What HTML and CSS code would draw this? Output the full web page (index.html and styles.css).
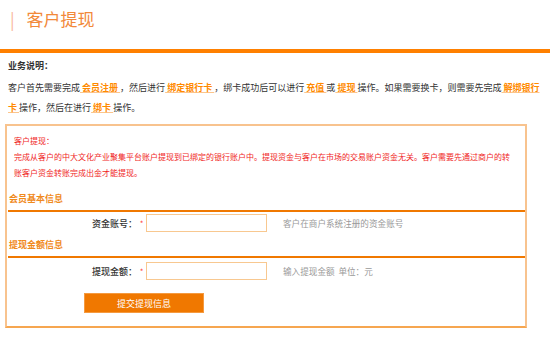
FILE: index.html
```html
<!DOCTYPE html>
<html lang="zh-CN">
<head>
  <meta charset="UTF-8">
  <title>客户提现</title>
  <link rel="stylesheet" href="styles.css">
</head>
<body>

<!-- Page title -->
<div class="page-title">
  <span class="title-mark">|</span>
  <h2>客户提现</h2>
</div>
<div class="title-bar"></div>

<!-- Business notes -->
<div class="intro">
  <p class="intro-head">业务说明：</p>
  <p>客户首先需要完成<a href="#">&nbsp;会员注册&nbsp;</a>，然后进行<a href="#">&nbsp;绑定银行卡&nbsp;</a>，绑卡成功后可以进行<a href="#">&nbsp;充值&nbsp;</a>或<a href="#">&nbsp;提现&nbsp;</a>操作。如果需要换卡，则需要先完成<a href="#">&nbsp;解绑银行卡&nbsp;</a>操作，然后在进行<a href="#">&nbsp;绑卡&nbsp;</a>操作。</p>
</div>

<!-- Form panel -->
<div class="panel">
  <div class="notice">
    <p>客户提现：</p>
    <p>完成从客户的中大文化产业聚集平台账户提现到已绑定的银行账户中。提现资金与客户在市场的交易账户资金无关。客户需要先通过商户的转账客户资金转账完成出金才能提现。</p>
  </div>

  <h3 class="section-head">会员基本信息</h3>
  <div class="form-row">
    <label for="account">资金账号：</label>
    <span class="required">*</span>
    <input type="text" id="account">
    <span class="hint">客户在商户系统注册的资金账号</span>
  </div>

  <h3 class="section-head">提现金额信息</h3>
  <div class="form-row">
    <label for="amount">提现金额：</label>
    <span class="required">*</span>
    <input type="text" id="amount">
    <span class="hint">输入提现金额&nbsp;&nbsp;单位：元</span>
  </div>

  <button class="submit-btn">提交提现信息</button>
</div>

</body>
</html>
```

FILE: styles.css
```css
* { box-sizing: border-box; }

body, html {
  margin: 0;
  padding: 0;
  background: #fff;
  font-family: "Noto Sans CJK SC", "DejaVu Sans", sans-serif;
  color: #333;
}

p, h2, h3 { margin: 0; }

/* Title */
.page-title {
  display: flex;
  align-items: center;
  height: 36px;
  padding-left: 10px;
}

.title-mark {
  color: #f9b79c;
  font-size: 17px;
  margin-right: 12px;
}

.page-title h2 {
  font-size: 17px;
  font-weight: normal;
  color: #f2893a;
}

.title-bar {
  height: 4px;
  margin-top: 13px;
  background: #ff8000;
}

/* Intro */
.intro {
  padding: 3px 8px 0;
  font-size: 9px;
  line-height: 20px;
}

.intro-head {
  font-weight: bold;
  margin-bottom: 2px;
}

.intro a {
  color: #ff8a00;
  font-weight: bold;
  text-decoration: underline;
  text-decoration-color: #fcc58c;
}

/* Panel */
.panel {
  margin: 6px 0 0 5px;
  width: 522px;
  border: 2px solid #f8c38e;
  border-bottom-color: #f6a650;
  padding: 0 0 13px 1px;
}

.notice {
  padding: 7px 10px 0 6px;
  font-size: 8px;
  line-height: 16px;
  color: #f01e1e;
}

.section-head {
  margin-top: 10px;
  padding: 0 0 3px 1px;
  font-size: 9px;
  line-height: 16px;
  color: #f08a1c;
  border-bottom: 2px solid #f07800;
}

.form-row + .section-head {
  margin-top: 5px;
}

.form-row {
  display: grid;
  grid-template-columns: 129px 9px 121px auto;
  align-items: center;
  margin-top: 2px;
  font-size: 9px;
}

.form-row + .section-head + .form-row {
  margin-top: 4px;
}

.form-row label {
  text-align: right;
  color: #333;
  font-weight: 500;
}

.required {
  color: #f44;
  font-size: 8px;
  text-align: center;
}

.form-row input {
  width: 121px;
  height: 18px;
  border: 1px solid #f8c890;
  outline: none;
  padding: 0 3px;
  font-size: 9px;
}

.hint {
  margin-left: 16px;
  color: #999;
  font-size: 8.6px;
}

.submit-btn {
  display: block;
  margin: 13px 0 0 76px;
  width: 120px;
  height: 20px;
  background: #f07800;
  border: 1px solid #f59a40;
  color: #fff;
  font-family: inherit;
  font-size: 9px;
  cursor: pointer;
}
```
